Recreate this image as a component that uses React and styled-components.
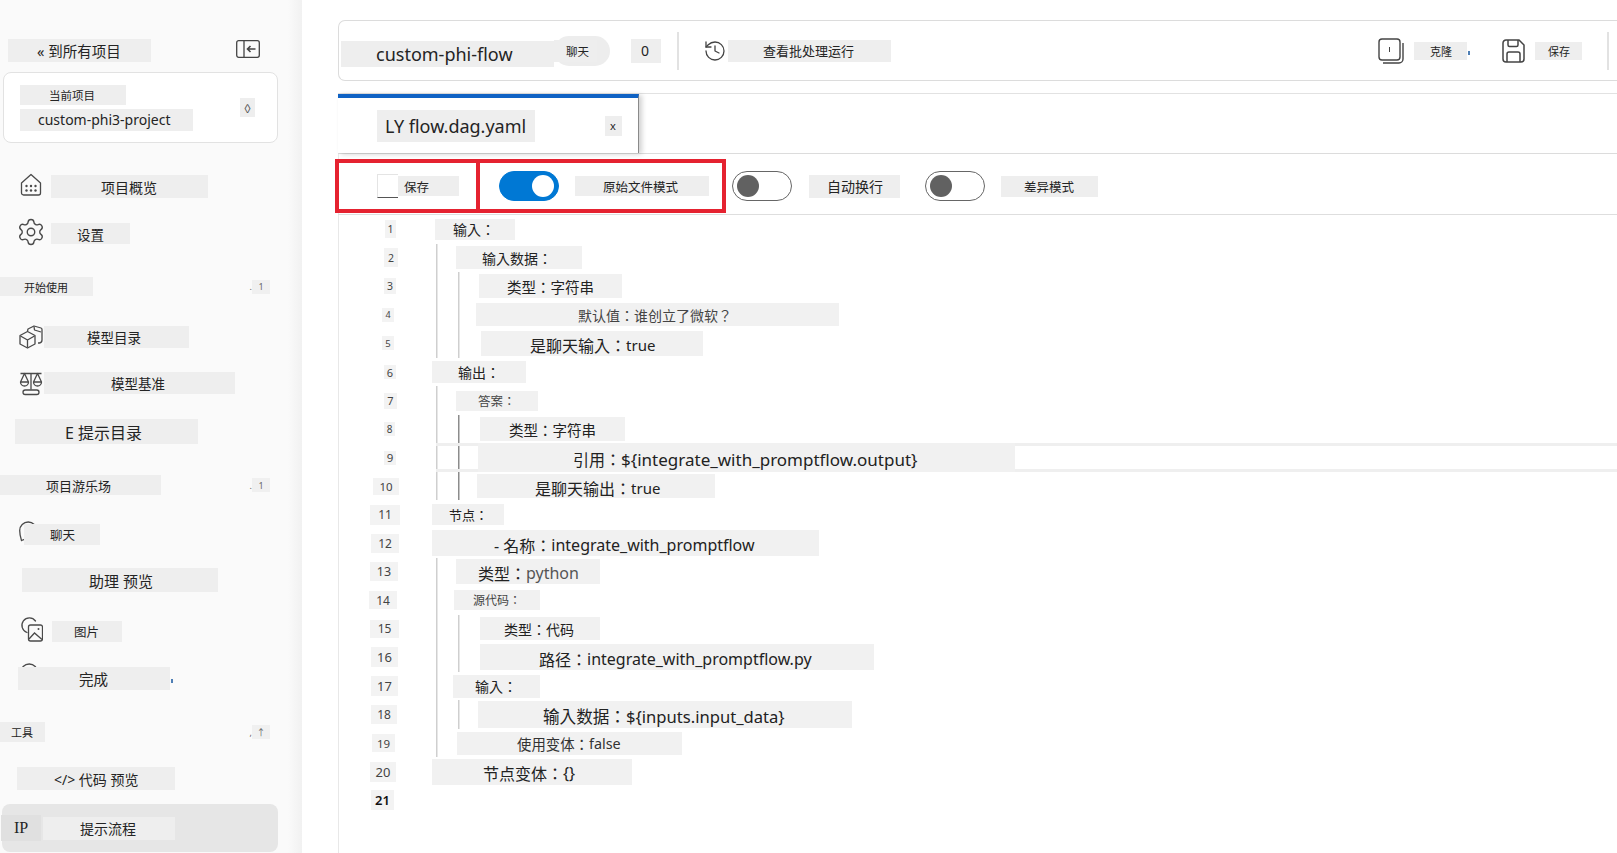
import React from "react";
import styled, { createGlobalStyle } from "styled-components";
import { History, Settings } from "lucide-react";

const GlobalStyle = createGlobalStyle`
  html, body { margin: 0; padding: 0; background: #fff; }
  body {
    font-family: "Noto Sans", "Noto Sans CJK SC", sans-serif;
    color: #242424;
    overflow: hidden;
  }
  * { box-sizing: border-box; }
`;

const codeLines = [
  { no: "1", nx: 46, nw: 11, nh: 18, ns: 10.5, x: -1, w: 80, h: 21, pad: 18, size: 14, text: "输入：" },
  { no: "2", nx: 45, nw: 14, nh: 19, ns: 10.5, x: 20, w: 126, h: 23, pad: 26, size: 14, text: "输入数据：", guides: 1 },
  { no: "3", nx: 45, nw: 12, nh: 16, ns: 10.5, x: 43, w: 143, h: 24, pad: 28, size: 14.5, text: "类型：字符串", guides: 2 },
  { no: "4", nx: 43, nw: 12, nh: 14, ns: 9, x: 40, w: 363, h: 23, pad: 102, size: 14, text: "默认值：谁创立了微软？", guides: 2, color: "#444" },
  { no: "5", nx: 43, nw: 12, nh: 14, ns: 9.5, x: 45, w: 222, h: 25, pad: 49, size: 16, text: "是聊天输入：", tail: "true", tailSize: 15, guides: 2 },
  { no: "6", nx: 45, nw: 12, nh: 14, ns: 11, x: -4, w: 94, h: 22, pad: 26, size: 14, text: "输出：" },
  { no: "7", nx: 45, nw: 13, nh: 16, ns: 11, x: 20, w: 82, h: 20, pad: 22, size: 12.5, text: "答案：", guides: 1, color: "#444" },
  { no: "8", nx: 45, nw: 11, nh: 14, ns: 10, x: 44, w: 145, h: 24, pad: 29, size: 14.5, text: "类型：字符串", guides: 2, dark: true },
  { no: "9", nx: 45, nw: 12, nh: 14, ns: 11.5, x: 42, w: 537, h: 29, pad: 95, size: 16, text: "引用：", tail: "${integrate_with_promptflow.output}", tailSize: 17, guides: 2, dark: true, current: true },
  { no: "10", nx: 34, nw: 26, nh: 17, ns: 11.5, x: 41, w: 238, h: 24, pad: 58, size: 16, text: "是聊天输出：", tail: "true", tailSize: 15, guides: 2, dark: true },
  { no: "11", nx: 31, nw: 30, nh: 20, ns: 12, x: -4, w: 72, h: 21, pad: 17, size: 13, text: "节点：" },
  { no: "12", nx: 32, nw: 28, nh: 19, ns: 12, x: -4, w: 387, h: 26, pad: 62, size: 16, text: "- 名称：", tail: "integrate_with_promptflow" },
  { no: "13", nx: 31, nw: 28, nh: 19, ns: 12.5, x: 20, w: 144, h: 25, pad: 22, size: 16, text: "类型：", tail: "python", guides: 1, tailColor: "#555" },
  { no: "14", nx: 30, nw: 28, nh: 18, ns: 12, x: 18, w: 86, h: 20, pad: 19, size: 12, text: "源代码：", guides: 1, color: "#444" },
  { no: "15", nx: 31, nw: 29, nh: 18, ns: 12, x: 44, w: 120, h: 23, pad: 24, size: 14, text: "类型：代码", guides: 2 },
  { no: "16", nx: 32, nw: 27, nh: 20, ns: 13, x: 44, w: 394, h: 26, pad: 59, size: 16, text: "路径：", tail: "integrate_with_promptflow.py", guides: 2 },
  { no: "17", nx: 32, nw: 27, nh: 20, ns: 13, x: 17, w: 87, h: 23, pad: 22, size: 14, text: "输入：", guides: 1 },
  { no: "18", nx: 32, nw: 26, nh: 19, ns: 12, x: 42, w: 374, h: 27, pad: 65, size: 16.6, text: "输入数据：", tail: "${inputs.input_data}", guides: 2 },
  { no: "19", nx: 33, nw: 23, nh: 18, ns: 11.5, x: 21, w: 225, h: 23, pad: 60, size: 14.4, text: "使用变体：", tail: "false", guides: 1, color: "#333" },
  { no: "20", nx: 31, nw: 26, nh: 20, ns: 13, x: -4, w: 200, h: 26, pad: 51, size: 16, text: "节点变体：", tail: "{}" },
  { no: "21", nx: 32, nw: 23, nh: 20, ns: 13, bold: true },
];

const guideLayers = ({ $guides, $dark }) => {
  if (!$guides) return "none";
  const outer = "linear-gradient(#cfcfcf, #cfcfcf) 97px 0 / 1.5px 100% no-repeat";
  if ($guides === 1) return outer;
  const tone = $dark ? "#8c8c8c" : "#cfcfcf";
  return `linear-gradient(${tone}, ${tone}) 119px 0 / 1.5px 100% no-repeat, ${outer}`;
};

const Page = styled.div`
  display: flex;
  height: 100vh;
  overflow: hidden;
`;

const Chip = styled.div`
  display: flex;
  align-items: center;
  flex: none;
  position: relative;
  white-space: nowrap;
  background: #eeeeee;
  width: ${(p) => p.$w}px;
  height: ${(p) => p.$h}px;
  margin-left: ${(p) => p.$l || 0}px;
  margin-top: ${(p) => p.$t || 0}px;
  padding-left: ${(p) => p.$pad || 0}px;
  font-size: ${(p) => p.$size || 14}px;
`;

const Speck = styled.span`
  position: absolute;
  right: -3px;
  top: 50%;
  width: 2px;
  height: 4px;
  background: #4f7fb5;
`;

/* sidebar */
const Sidebar = styled.aside`
  flex: none;
  width: 302px;
  padding-top: 39px;
  background: linear-gradient(to right, #fafafa 288px, #f1f1f1 302px);
`;

const SideHeader = styled.div`
  display: flex;
  align-items: flex-start;
  padding-right: 42px;
`;

const CollapseButton = styled.svg`
  margin-left: auto;
  margin-top: 1px;
  width: 24px;
  height: 18px;
  color: #444;
`;

const ProjectCard = styled.div`
  display: flex;
  align-items: center;
  width: 275px;
  height: 71px;
  margin: 10px 0 0 3px;
  padding: 0 22px 0 16px;
  background: #fff;
  border: 1px solid #e2e2e2;
  border-radius: 8px;
`;

const ProjectText = styled.div`
  display: flex;
  flex-direction: column;
  gap: 4px;
`;

const Spinner = styled(Chip)`
  margin-left: auto;
  justify-content: center;
  font-size: 11px;
  color: #555;
`;

const NavRow = styled.div`
  display: flex;
  align-items: flex-start;
  margin-top: ${(p) => p.$mt}px;
  padding-left: ${(p) => p.$indent || 0}px;
`;

const NavIcon = styled.svg`
  flex: none;
  width: 24px;
  height: ${(p) => p.$height || 24}px;
  color: #4a4a4a;
`;

const GearIcon = styled(Settings)`
  flex: none;
  margin: -2px -3px -3px;
  color: #4a4a4a;
`;

const SectionRow = styled.div`
  display: flex;
  align-items: center;
  margin-top: ${(p) => p.$mt}px;
  padding-right: 32px;
  font-size: 11px;
`;

const Fold = styled.div`
  display: flex;
  align-items: center;
  margin-left: auto;
  color: #666;
  font-size: 9px;
`;

const FoldMark = styled.span`
  display: flex;
  align-items: center;
  justify-content: center;
  width: 18px;
  height: 14px;
  background: #f0f0f0;
`;

const ActiveItem = styled.div`
  display: flex;
  align-items: center;
  width: 276px;
  height: 48px;
  margin: 14px 0 0 2px;
  background: #e6e6e6;
  border-radius: 8px;
`;

const IpMark = styled(Chip)`
  font-family: "Liberation Serif", serif;
  margin-left: -1px;
  background: #e0e0e0;
`;

/* main column */
const Main = styled.main`
  flex: 1;
  min-width: 0;
  display: flex;
  flex-direction: column;
  padding-left: 36px;
`;

const TopCard = styled.header`
  display: flex;
  align-items: center;
  flex: none;
  height: 61px;
  margin-top: 20px;
  padding-left: 2px;
  border: 1px solid #dcdcdc;
  border-right: none;
  border-radius: 7px 0 0 7px;
`;

const ChatBadge = styled.div`
  flex: none;
  width: 56px;
  height: 30px;
  border-radius: 15px;
  background: #ededed;
  display: flex;
  align-items: center;
`;

const BarDivider = styled.div`
  flex: none;
  width: 2px;
  height: 38px;
  margin-left: ${(p) => p.$l}px;
  background: #e2e2e2;
`;

const BarIcon = styled.svg`
  flex: none;
  margin-left: ${(p) => p.$l}px;
  width: ${(p) => p.$w}px;
  height: ${(p) => p.$h}px;
  color: #444;
`;

const BarActions = styled.div`
  display: flex;
  align-items: center;
  margin-left: auto;
  padding-right: 8px;
`;

const TabStrip = styled.div`
  display: flex;
  flex: none;
  height: 61px;
  margin-top: 12px;
  border-top: 1px solid #e2e2e2;
  border-bottom: 1px solid #dcdcdc;
`;

const Tab = styled.div`
  display: flex;
  align-items: center;
  width: 301px;
  border-top: 4px solid #0f62c4;
  border-right: 1px solid #8a8a8a;
  box-shadow: 3px 1px 5px rgba(0, 0, 0, 0.18);
  background: #fff;
`;

const Editor = styled.section`
  flex: 1;
  border-left: 1px solid #e8e8e8;
`;

const Toolbar = styled.div`
  display: flex;
  align-items: center;
  height: 61px;
  padding-top: 4px;
  border-bottom: 1px solid #dedede;
  margin-left: -1px;
`;

const SaveFrame = styled.div`
  display: flex;
  align-items: center;
  flex: none;
  width: 145px;
  height: 54px;
  margin-left: -3px;
  padding-left: 38px;
  border: 4px solid #e52230;
`;

const SaveBox = styled.div`
  flex: none;
  width: 21px;
  height: 24px;
  border-left: 1px solid #e4e4e4;
  border-top: 1px solid #e4e4e4;
  border-bottom: 1px solid #555;
`;

const RawFrame = styled.div`
  display: flex;
  align-items: center;
  flex: none;
  width: 246px;
  height: 54px;
  padding-left: 19px;
  border: 4px solid #e52230;
  border-left: none;
`;

const Toggle = styled.div`
  flex: none;
  display: flex;
  align-items: center;
  justify-content: ${(p) => (p.$on ? "flex-end" : "flex-start")};
  width: 60px;
  height: 30px;
  margin-left: ${(p) => p.$l || 0}px;
  padding: 0 4px;
  border-radius: 15px;
  background: ${(p) => (p.$on ? "#0078d4" : "#fff")};
  border: 1px solid ${(p) => (p.$on ? "#0078d4" : "#666")};
`;

const Knob = styled.span`
  width: 22px;
  height: 22px;
  border-radius: 50%;
  background: ${(p) => (p.$on ? "#fff" : "#616161")};
`;

const Line = styled.div`
  display: flex;
  align-items: center;
  height: 28.55px;
  background: ${guideLayers};
`;

const Gutter = styled.div`
  flex: none;
  width: 97px;
`;

const LineNo = styled(Chip)`
  justify-content: center;
  background: #f3f3f3;
  color: ${(p) => (p.$bold ? "#111" : "#444")};
  font-weight: ${(p) => (p.$bold ? 600 : 400)};
`;

const CodeArea = styled.div`
  flex: 1;
  min-width: 0;
  display: flex;
  align-items: center;
  height: 29px;
  border-top: ${(p) => (p.$current ? "3px solid #efefef" : "none")};
  border-bottom: ${(p) => (p.$current ? "3px solid #efefef" : "none")};
`;

const CodeChunk = styled(Chip)`
  background: #f1f1f1;
  color: ${(p) => p.$color || "#222"};
  font-family: "Noto Sans", "Noto Sans CJK TC", sans-serif;
  padding-top: ${(p) => (p.$size >= 15 ? 3 : 0)}px;
`;

const Tail = styled.span`
  color: ${(p) => p.$color || "inherit"};
  font-size: ${(p) => (p.$size ? `${p.$size}px` : "inherit")};
`;

const HomeIcon = () => (
  <NavIcon viewBox="0 0 24 24" fill="none" stroke="currentColor" strokeWidth="1.3">
    <path d="M2.5 10 12 1.5l9.5 8.5v10a2 2 0 0 1-2 2h-15a2 2 0 0 1-2-2z" strokeLinejoin="round" />
    <g fill="currentColor" stroke="none">
      <circle cx="7.5" cy="13" r="1.2" /><circle cx="12" cy="13" r="1.2" /><circle cx="16.5" cy="13" r="1.2" />
      <circle cx="7.5" cy="17.5" r="1.2" /><circle cx="12" cy="17.5" r="1.2" /><circle cx="16.5" cy="17.5" r="1.2" />
    </g>
  </NavIcon>
);

const CubeIcon = () => (
  <NavIcon viewBox="0 0 24 24" fill="none" stroke="currentColor" strokeWidth="1.3" strokeLinejoin="round">
    <path d="M1 10.5 8.5 6.5l7.5 4v8.5l-7.5 4-7.5-4z" />
    <path d="M1.5 11 8.5 15l7-4M8.5 15v7.5" />
    <path d="M8.5 6 9 4l6-3 7 2a1.5 1.5 0 0 1 1 1.4V15a3 3 0 0 1-2.5 3H19" />
    <path d="M15 1.5 15.5 5 22 7" />
  </NavIcon>
);

const ScaleIcon = () => (
  <NavIcon viewBox="0 0 24 24" fill="none" stroke="currentColor" strokeWidth="1.3" strokeLinejoin="round">
    <path d="M1.5 1.5h21M12 1.5v16" />
    <path d="M5.5 1.5 1.5 10a4 4 0 0 0 8 0zM1.5 10h8" />
    <path d="M18.5 1.5 14.5 10a4 4 0 0 0 8 0zM14.5 10h8" />
    <rect x="4" y="18" width="16" height="4.5" rx="2.2" />
  </NavIcon>
);

const ChatIcon = () => (
  <NavIcon $height={21} viewBox="0 0 24 21" fill="none" stroke="currentColor" strokeWidth="1.3">
    <path d="M2.5 19.5C1 15 .7 12 .7 9.5a8.5 8.5 0 0 1 17 0 8.5 8.5 0 0 1-8.5 8.5c-3 0-5 .5-6.7 1.5z" />
  </NavIcon>
);

const PictureIcon = () => (
  <NavIcon $height={26} viewBox="0 0 24 26" fill="none" stroke="currentColor" strokeWidth="1.3">
    <path d="M8 15.5A7.5 7.5 0 1 1 16.5 4" strokeLinecap="round" />
    <rect x="9.5" y="8" width="14" height="16" rx="2" />
    <path d="M10 22l5.5-6 7.5 6.5" />
    <circle cx="19.5" cy="12" r="1" fill="currentColor" stroke="none" />
  </NavIcon>
);

const FoldRow = ({ mt, w, h, pad, size, label, mark, lead = "." }) => (
  <SectionRow $mt={mt}>
    <Chip $w={w} $h={h} $pad={pad} $size={size}>{label}</Chip>
    <Fold>{lead}<FoldMark>{mark}</FoldMark></Fold>
  </SectionRow>
);

const App = () => (
  <Page>
    <GlobalStyle />
    <Sidebar>
      <SideHeader>
        <Chip $l={8} $w={143} $h={23} $pad={29} $size={14.5}>« 到所有项目</Chip>
        <CollapseButton viewBox="0 0 24 18" fill="none" stroke="currentColor" strokeWidth="1.3">
          <rect x="0.7" y="0.7" width="22.6" height="16.6" rx="2" />
          <path d="M8 1v16" />
          <path d="M19.5 9h-8M14.5 6l-3 3 3 3" strokeWidth="1.6" />
        </CollapseButton>
      </SideHeader>
      <ProjectCard>
        <ProjectText>
          <Chip $w={106} $h={20} $pad={29} $size={11.5}>当前项目</Chip>
          <Chip $w={173} $h={22} $pad={18} $size={14}>custom-phi3-project</Chip>
        </ProjectText>
        <Spinner as="div" $w={15} $h={19}>◊</Spinner>
      </ProjectCard>
      <NavRow $mt={30} $indent={19}>
        <HomeIcon />
        <Chip $l={8} $w={157} $h={23} $t={2} $pad={50} $size={14}>项目概览</Chip>
      </NavRow>
      <NavRow $mt={21} $indent={19}>
        <GearIcon size={30} strokeWidth={1.1} />
        <Chip $l={8} $w={79} $h={21} $t={4} $pad={26} $size={13.5}>设置</Chip>
      </NavRow>
      <FoldRow mt={33} w={93} h={19} pad={24} size={11} label="开始使用" mark="1" />
      <NavRow $mt={29} $indent={19}>
        <CubeIcon />
        <Chip $l={1} $w={145} $h={22} $t={1} $pad={43} $size={13.5}>模型目录</Chip>
      </NavRow>
      <NavRow $mt={23} $indent={19}>
        <ScaleIcon />
        <Chip $l={1} $w={191} $h={22} $pad={67} $size={13.5}>模型基准</Chip>
      </NavRow>
      <NavRow $mt={23} $indent={15}>
        <Chip $w={183} $h={25} $pad={50} $size={16}>E 提示目录</Chip>
      </NavRow>
      <FoldRow mt={31} w={161} h={20} pad={46} size={13} label="项目游乐场" mark="1" />
      <NavRow $mt={26} $indent={19}>
        <ChatIcon />
        <Chip $l={-19} $w={76} $h={21} $t={3} $pad={26} $size={12.5}>聊天</Chip>
      </NavRow>
      <NavRow $mt={23} $indent={22}>
        <Chip $w={196} $h={24} $pad={67} $size={15}>助理 预览</Chip>
      </NavRow>
      <NavRow $mt={25} $indent={19}>
        <PictureIcon />
        <Chip $l={9} $w={70} $h={21} $t={4} $pad={22} $size={12.5}>图片</Chip>
      </NavRow>
      <NavRow $mt={20} $indent={20}>
        <ChatIcon />
        <Chip $l={-26} $w={152} $h={23} $t={4} $pad={61} $size={14.5}>完成<Speck /></Chip>
      </NavRow>
      <FoldRow mt={32} w={45} h={20} pad={11} size={11} label="工具" mark="↑" lead="," />
      <NavRow $mt={25} $indent={17}>
        <Chip $w={158} $h={23} $pad={37} $size={14}>&lt;/&gt; 代码 预览</Chip>
      </NavRow>
      <ActiveItem>
        <IpMark $w={40} $h={26} $pad={13} $size={16}>IP</IpMark>
        <Chip $l={2} $w={132} $h={23} $pad={37} $size={14}>提示流程</Chip>
      </ActiveItem>
    </Sidebar>

    <Main>
      <TopCard>
        <Chip $w={213} $h={26} $t={6} $pad={35} $size={18}>custom-phi-flow</Chip>
        <ChatBadge>
          <Chip $w={43} $h={22} $pad={12} $size={11.5}>聊天</Chip>
        </ChatBadge>
        <Chip $l={21} $w={30} $h={24} $pad={10} $size={14}>0</Chip>
        <BarDivider $l={16} />
        <BarIcon as={History} $l={24} $w={24} $h={24} strokeWidth={1.3} />
        <Chip $l={1} $w={163} $h={22} $pad={35} $size={13}>查看批处理运行</Chip>
        <BarActions>
          <BarIcon $l={0} $w={26} $h={26} viewBox="0 0 26 26" fill="none" stroke="currentColor" strokeWidth="1.4">
            <path d="M25 5v16a4 4 0 0 1-4 4H5" />
            <rect x="1" y="1" width="21" height="21" rx="3" />
            <path d="M11.5 9v5" strokeWidth="1" />
          </BarIcon>
          <Chip $l={10} $w={53} $h={18} $pad={16} $size={11}>克隆<Speck /></Chip>
          <BarIcon $l={35} $w={23} $h={24} viewBox="0 0 23 24" fill="none" stroke="currentColor" strokeWidth="1.5">
            <path d="M1 4a3 3 0 0 1 3-3h13l5 5v14a3 3 0 0 1-3 3H4a3 3 0 0 1-3-3z" />
            <path d="M6 1v5a1.5 1.5 0 0 0 1.5 1.5h7A1.5 1.5 0 0 0 16 6V1" />
            <path d="M5 23v-8a2 2 0 0 1 2-2h9a2 2 0 0 1 2 2v8" />
          </BarIcon>
          <Chip $l={10} $w={47} $h={18} $pad={13} $size={11}>保存</Chip>
          <BarDivider $l={25} />
        </BarActions>
      </TopCard>

      <TabStrip>
        <Tab>
          <Chip $l={39} $w={158} $h={32} $t={1} $pad={8} $size={18}>LY flow.dag.yaml</Chip>
          <Chip $l={70} $w={17} $h={20} $pad={5} $size={11}>x</Chip>
        </Tab>
      </TabStrip>

      <Editor>
        <Toolbar>
          <SaveFrame>
            <SaveBox />
            <Chip $w={61} $h={20} $pad={6} $size={12.5}>保存</Chip>
          </SaveFrame>
          <RawFrame>
            <Toggle $on><Knob $on /></Toggle>
            <Chip $l={16} $w={134} $h={20} $pad={28} $size={12.5}>原始文件模式</Chip>
          </RawFrame>
          <Toggle $l={6}><Knob /></Toggle>
          <Chip $l={17} $w={91} $h={23} $pad={18} $size={14}>自动换行</Chip>
          <Toggle $l={25}><Knob /></Toggle>
          <Chip $l={16} $w={97} $h={21} $pad={23} $size={12.5}>差异模式</Chip>
        </Toolbar>

        {codeLines.map((line) => (
          <Line key={line.no} $guides={line.guides} $dark={line.dark}>
            <Gutter>
              <LineNo $l={line.nx} $w={line.nw} $h={line.nh} $size={line.ns} $bold={line.bold}>
                {line.no}
              </LineNo>
            </Gutter>
            <CodeArea $current={line.current}>
              {line.text && (
                <CodeChunk $l={line.x} $w={line.w} $h={line.h} $pad={line.pad} $size={line.size} $color={line.color}>
                  {line.text}
                  {line.tail && <Tail $color={line.tailColor} $size={line.tailSize}>{line.tail}</Tail>}
                </CodeChunk>
              )}
            </CodeArea>
          </Line>
        ))}
      </Editor>
    </Main>
  </Page>
);

export default App;
